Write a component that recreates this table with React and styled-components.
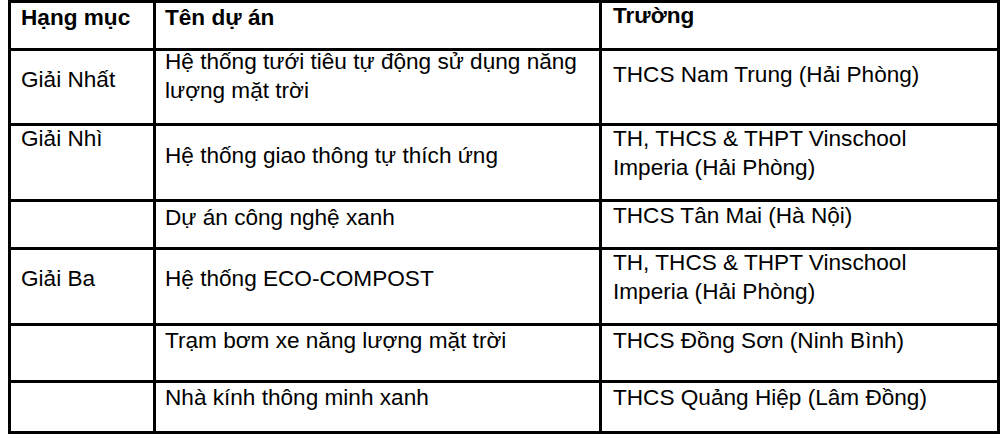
import React from "react";
import styled, { createGlobalStyle } from "styled-components";

const GlobalStyle = createGlobalStyle`
  html, body {
    margin: 0;
    padding: 0;
    background: #fff;
  }
  body {
    font-family: "Liberation Sans", Arial, sans-serif;
    color: #000;
  }
`;

const Page = styled.div`
  padding-left: 8px;
  width: 992px;
`;

const Table = styled.div`
  display: grid;
  grid-template-columns: 145px 446px 398px;
  grid-template-rows: 48px 75px 76px 48px 76px 57px 51px;
  border-top: 3px solid #000;
  border-left: 3px solid #000;
  font-size: 22.6px;
  line-height: 28.5px;
`;

const Cell = styled.div`
  border-right: 3px solid #000;
  border-bottom: 3px solid #000;
  padding-left: ${(p) => p.$pl}px;
  padding-right: 6px;
  font-weight: ${(p) => (p.$head ? 700 : 400)};
`;

const Text = styled.div`
  margin-top: ${(p) => p.$top}px;
  white-space: nowrap;
`;

const padLeft = [10, 9, 11];

// vertical offsets (px from the top of each cell) taken from the reference
const rows = [
  { head: true, cells: [["Hạng mục"], ["Tên dự án"], ["Trường"]], top: [1, 1, -1] },
  {
    cells: [
      ["Giải Nhất"],
      ["Hệ thống tưới tiêu tự động sử dụng năng", "lượng mặt trời"],
      ["THCS Nam Trung (Hải Phòng)"],
    ],
    top: [15, -3, 10],
  },
  {
    cells: [
      ["Giải Nhì"],
      ["Hệ thống giao thông tự thích ứng"],
      ["TH, THCS & THPT Vinschool", "Imperia (Hải Phòng)"],
    ],
    top: [-1, 16, -1],
  },
  { cells: [[""], ["Dự án công nghệ xanh"], ["THCS Tân Mai (Hà Nội)"]], top: [0, 2, 0] },
  {
    cells: [
      ["Giải Ba"],
      ["Hệ thống ECO-COMPOST"],
      ["TH, THCS & THPT Vinschool", "Imperia (Hải Phòng)"],
    ],
    top: [15, 15, -1],
  },
  {
    cells: [[""], ["Trạm bơm xe năng lượng mặt trời"], ["THCS Đồng Sơn (Ninh Bình)"]],
    top: [1, 1, 1],
  },
  {
    cells: [[""], ["Nhà kính thông minh xanh"], ["THCS Quảng Hiệp (Lâm Đồng)"]],
    top: [1, 1, 1],
  },
];

export default function App() {
  return (
    <>
      <GlobalStyle />
      <Page>
        <Table>
          {rows.map((row, r) =>
            row.cells.map((lines, c) => (
              <Cell key={`${r}-${c}`} $pl={padLeft[c]} $head={row.head}>
                <Text $top={row.top[c]}>
                  {lines.map((line, i) => (
                    <React.Fragment key={i}>
                      {i > 0 && <br />}
                      {line}
                    </React.Fragment>
                  ))}
                </Text>
              </Cell>
            ))
          )}
        </Table>
      </Page>
    </>
  );
}
